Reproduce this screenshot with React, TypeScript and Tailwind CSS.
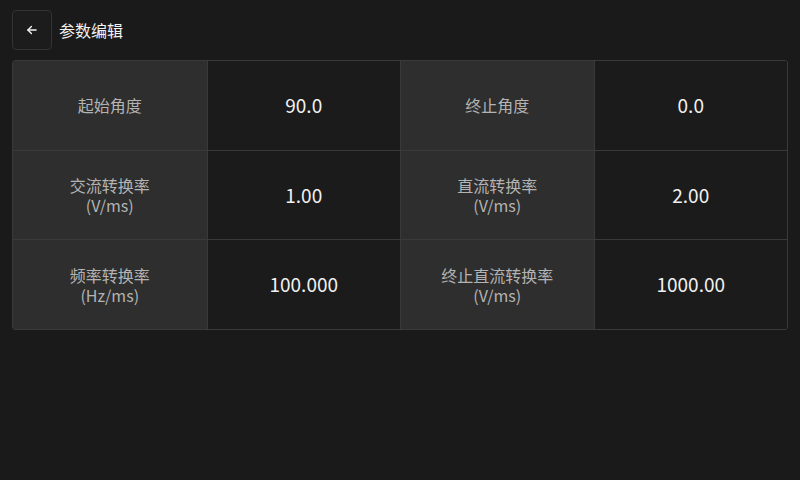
import React from "react";

const rows: { label: string; unit?: string; value: string }[][] = [
  [
    { label: "起始角度", value: "90.0" },
    { label: "终止角度", value: "0.0" },
  ],
  [
    { label: "交流转换率", unit: "(V/ms)", value: "1.00" },
    { label: "直流转换率", unit: "(V/ms)", value: "2.00" },
  ],
  [
    { label: "频率转换率", unit: "(Hz/ms)", value: "100.000" },
    { label: "终止直流转换率", unit: "(V/ms)", value: "1000.00" },
  ],
];

export default function App() {
  return (
    <div
      className="w-[800px] h-[480px] bg-[#1a1a1a] overflow-hidden"
      style={{ fontFamily: '"Noto Sans CJK SC", "Noto Sans", sans-serif' }}
    >
      <div className="flex items-center h-[60px] px-[12px] py-[10px] gap-[7px]">
        <button className="w-[40px] h-[40px] rounded-[4px] border border-[#333333] bg-[#1c1c1c] flex items-center justify-center">
          <svg width="14" height="14" viewBox="0 0 24 24" fill="none" stroke="#f0f0f0" strokeWidth="2.4" strokeLinecap="round" strokeLinejoin="round">
            <path d="M19 12H5" />
            <path d="M11 6l-6 6 6 6" />
          </svg>
        </button>
        <span className="text-[16px] text-[#f2f2f2] leading-none">参数编辑</span>
      </div>
      <div className="mx-[12px] h-[270px] flex flex-col border border-[#3a3a3a] rounded-[3px] overflow-hidden">
        {rows.map((row, ri) => (
          <div
            key={ri}
            className={`grid grid-cols-4 flex-1 ${ri > 0 ? "border-t border-[#3a3a3a]" : ""}`}
          >
            {row.map((c, ci) => (
              <React.Fragment key={ci}>
                <div
                  className={`bg-[#2e2e2e] flex flex-col items-center justify-center text-[16px] leading-[20px] text-[#b3b3b3] ${ci > 0 ? "border-l border-[#3a3a3a]" : ""}`}
                >
                  <span>{c.label}</span>
                  {c.unit && <span>{c.unit}</span>}
                </div>
                <div className="bg-[#1b1b1b] border-l border-[#3a3a3a] flex items-center justify-center text-[19px] text-[#f0f0f0]">
                  {c.value}
                </div>
              </React.Fragment>
            ))}
          </div>
        ))}
      </div>
    </div>
  );
}
